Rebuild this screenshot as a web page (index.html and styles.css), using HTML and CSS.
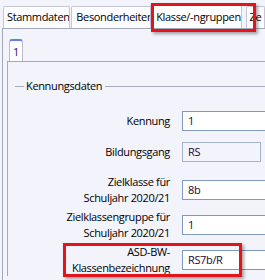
FILE: index.html
```html
<!DOCTYPE html>
<html lang="de">
<head>
    <meta charset="UTF-8">
    <title>Klasse/-ngruppen</title>
    <link rel="stylesheet" href="styles.css">
</head>
<body>
    <div class="tabstrip">
        <div class="tab tab-stamm">Stammdaten</div>
        <div class="tab tab-bes">Besonderheiten</div>
        <div class="tab active">Klasse/-ngruppen</div>
        <div class="tab tab-ze">Ze</div>
    </div>

    <div class="panel">
        <div class="subtabs">
            <div class="subtab">1</div>
        </div>
        <div class="subpanel">
            <div class="group-title">
                <span class="line short"></span>
                <span class="title">Kennungsdaten</span>
                <span class="line"></span>
            </div>

            <div class="row row-kennung">
                <label class="label">Kennung</label>
                <div class="field">1</div>
            </div>
            <div class="row row-bildung">
                <label class="label">Bildungsgang</label>
                <div class="field disabled">RS</div>
            </div>
            <div class="row row-double row-ziel">
                <label class="label">Zielklasse für<br>Schuljahr 2020/21</label>
                <div class="field">8b</div>
            </div>
            <div class="row row-double row-gruppe">
                <label class="label">Zielklassengruppe für<br>Schuljahr 2020/21</label>
                <div class="field">1</div>
            </div>
            <div class="row row-double row-asd">
                <label class="label">ASD-BW-<br>Klassenbezeichnung</label>
                <div class="field">RS7b/R</div>
            </div>
        </div>
    </div>

    <!-- red markers drawn over the screenshot -->
    <div class="marker marker-tab"></div>
    <div class="marker marker-asd"></div>
</body>
</html>
```

FILE: styles.css
```css
body {
    margin: 0;
    width: 265px;
    height: 280px;
    overflow: hidden;
    position: relative;
    background-color: #f3f3fb;
    font-family: "Open Sans", "Noto Sans", sans-serif;
    font-size: 11px;
    letter-spacing: -0.35px;
    color: #000;
}

/* top tab strip */
.tabstrip {
    display: flex;
    align-items: flex-end;
    height: 28px;
    padding-left: 3px;
    position: relative;
    z-index: 2;
}
.tab {
    box-sizing: border-box;
    height: 22px;
    line-height: 20px;
    padding: 0 0 0 3px;
    background-color: #fdfdff;
    border: 1px solid #c4c7d3;
    border-bottom: none;
    border-radius: 2px 2px 0 0;
    white-space: nowrap;
    overflow: hidden;
}
.tab-stamm {
    width: 70px;
    margin-right: 1px;
}
.tab-bes {
    width: 84px;
    padding-left: 4px;
}
.tab.active {
    width: 95px;
    height: 24px;
    margin-left: -2px;
    padding-left: 5px;
    line-height: 21px;
    border-top: 2px solid #5c82d6;
    background-color: #fff;
    position: relative;
}
.tab-ze {
    margin-left: 4px;
    width: 20px;
}

/* main panel */
.panel {
    margin-left: 2px;
    border-top: 1px solid #a3a9ba;
    border-left: 1px solid #a3a9ba;
    height: 260px;
}
.subtabs {
    display: flex;
    padding: 10px 0 0 6px;
}
.subtab {
    box-sizing: border-box;
    width: 14px;
    height: 22px;
    padding-left: 3px;
    line-height: 22px;
    background-color: #fdfdff;
    border: 1px solid #b9bdcb;
    border-top: 2px solid #5c82d6;
    border-bottom: none;
    border-radius: 3px 3px 0 0;
    color: #3a0a50;
}
.subpanel {
    margin-left: 4px;
    border-top: 1px solid #a3a9ba;
    border-left: 1px solid #a3a9ba;
    padding: 16px 0 0 7px;
}

/* group box header */
.group-title {
    display: flex;
    align-items: center;
    height: 16px;
}
.group-title .line {
    flex: 1;
    height: 1px;
    background-color: #a8acba;
}
.group-title .line.short {
    flex: 0 0 9px;
}
.group-title .title {
    padding: 0 3px 0 2px;
    line-height: 16px;
}

/* form rows */
.row {
    display: flex;
    align-items: center;
    gap: 12px;
    height: 20px;
}
.row-double {
    height: 32px;
}
.row-kennung {
    margin-top: 17px;
}
.row-bildung {
    margin-top: 11px;
}
.row-ziel {
    margin-top: 12px;
}
.row-gruppe {
    margin-top: 3px;
}
.row-asd {
    margin-top: 3px;
}
.label {
    width: 155px;
    flex: 0 0 155px;
    text-align: right;
    line-height: 16px;
}
.field {
    box-sizing: border-box;
    flex: 0 0 100px;
    height: 20px;
    line-height: 18px;
    padding-left: 5px;
    background-color: #fff;
    border: 1px solid #7f9ac0;
    color: #1c0832;
}
.field.disabled {
    flex-basis: 79px;
    background-color: #f3f3fb;
    border-color: #a6b3c9;
}

/* red highlight frames */
.marker {
    position: absolute;
    box-sizing: border-box;
    border: 3px solid #e5141b;
    box-shadow: 2px 2px 3px rgba(0, 0, 0, 0.35);
    z-index: 5;
}
.marker-tab {
    left: 151px;
    top: 3px;
    width: 105px;
    height: 29px;
}
.marker-asd {
    left: 63px;
    top: 243px;
    width: 179px;
    height: 34px;
}
```
